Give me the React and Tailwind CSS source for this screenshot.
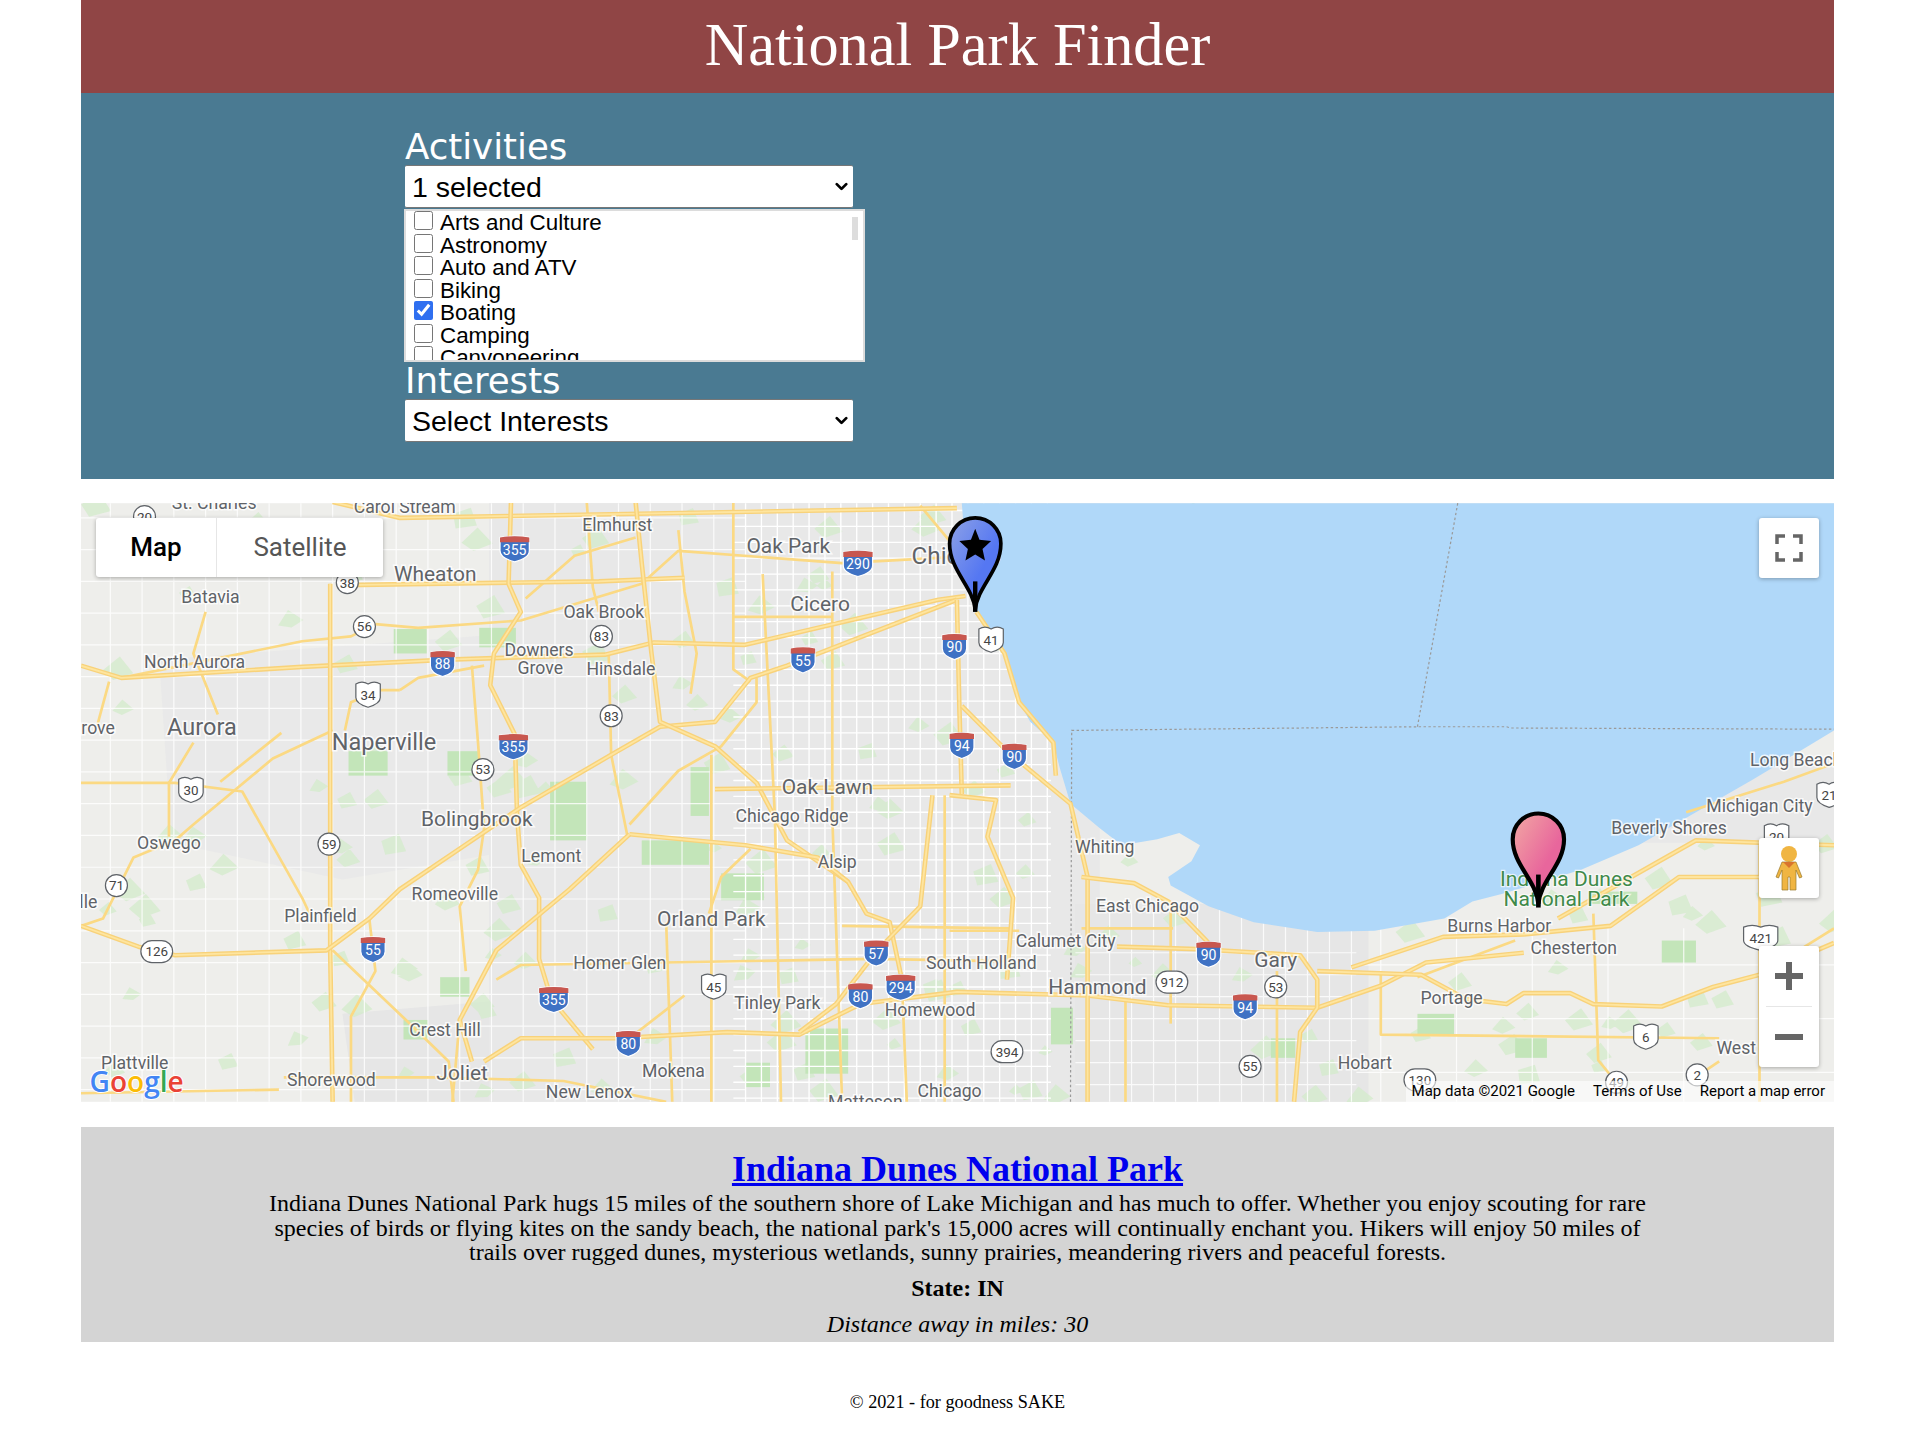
import React from "react";
import { ChevronDown } from "lucide-react";

// ================= MAP DATA (coords in the map's viewBox) =================

const lake =
  "M787 412 L790 450 L799 501 L808 515 L822 535 L832 571 L843 591 L862 608 L867 628 L876 658 L900 678 L918 692 L947 687 L965 682 L982 692 L975 705 L956 718 L958 725 L989 742 L1026 755 L1078 763 L1125 762 L1182 752 L1205 738 L1229 732 L1294 712 L1341 692 L1388 665 L1435 638 L1501 598 L1501 412 Z";

const highways = [
  "M272 411 L327 424 L500 421 L783 416",
  "M66 545 L99 555 L247 546 L366 540 L495 536 L535 526 L609 528 L768 491 L790 488",
  "M270 478 L270 778 L272 902",
  "M282 479 L490 476 L560 473",
  "M418 411 L416 478 L426 501 L404 535 L401 561 L421 601 L423 668 L426 708 L441 735 L441 785 L451 818 L485 859",
  "M783 491 L644 545 L614 555 L585 591 L540 595 L500 618 L426 661 L327 728 L302 752 L267 778 L143 782 L113 775 L66 758",
  "M520 411 L525 461 L533 535 L540 591 L585 611 L619 641 L644 688 L694 722 L709 748 L728 755 L738 802",
  "M396 869 L426 850 L505 850 L595 845 L654 847 L704 822 L783 812 L890 815 L956 823 L1078 825 L1130 807 L1167 788 L1247 780",
  "M763 651 L753 742 L718 778 L684 822 L654 845",
  "M783 491 L785 578 L787 650",
  "M585 646 L827 643",
  "M515 683 L610 692 L669 702 L694 722",
  "M515 683 L466 728 L406 778 L376 835 L386 869",
  "M787 578 L824 615 L876 658 L890 718 L890 902",
  "M799 501 L822 535 L834 575 L862 608 L864 635",
  "M777 651 L815 655 L808 685 L829 735 L824 802",
  "M885 718 L928 723 L956 738 L989 772",
  "M914 775 L980 777 L1064 782 L1078 802 L1078 825 L1064 845 L1059 902",
  "M1078 795 L1163 798 L1200 818 L1233 822 L1247 813 L1285 813 L1304 822 L1360 824 L1402 808 L1440 798 L1501 772",
  "M1106 792 L1181 767 L1247 765 L1318 758 L1374 718 L1440 718",
  "M1275 752 L1388 688 L1501 692",
];

const minorRoads = [
  "M582 618 L582 902",
  "M624 470 L634 668 L639 902",
  "M681 468 L681 668 L689 902",
  "M773 651 L773 902",
  "M498 535 L500 618 L513 683",
  "M66 641 L143 641 L198 648 L247 735 L255 752",
  "M272 598 L223 621 L158 675 L143 688 L109 702 L99 722 L84 752 L66 758",
  "M158 608 L138 641 L138 685",
  "M168 501 L158 535 L178 585",
  "M307 511 L342 514 L426 508 L525 478 L555 451 L689 461 L783 456",
  "M99 555 L247 525 L287 521 L307 511",
  "M327 565 L342 555 L396 545",
  "M386 545 L391 608 L396 678 L391 712 L376 742 L381 795",
  "M232 882 L357 882 L461 885 L545 902",
  "M66 895 L228 892",
  "M302 752 L307 795 L287 832 L287 902",
  "M272 778 L332 835 L367 869 L371 902",
  "M406 802 L426 790 L714 785 L827 787",
  "M689 758 L827 760",
  "M958 742 L958 838",
  "M777 762 L834 762",
  "M1130 795 L1130 847 L1407 850",
  "M1304 748 L1308 868 L1322 885",
  "M1440 692 L1440 902",
  "M1407 869 L1383 885",
  "M921 902 L921 818",
  "M1045 795 L1045 902",
  "M1380 665 L1460 640 L1501 625",
  "M1440 798 L1501 760",
  "M480 411 L485 481 L490 501",
  "M555 434 L560 484 L570 535 L565 568",
  "M600 411 L600 548 L614 558",
  "M619 555 L619 575 L590 611 L555 631 L515 675",
  "M282 598 L287 575 L312 565 L327 565",
  "M614 695 L590 718 L580 748",
  "M545 755 L550 902",
  "M515 850 L560 815",
  "M753 414 L778 444",
  "M79 595 L89 558",
  "M376 835 L370 902",
  "M738 802 L742 902",
  "M430 490 L470 455 L520 440",
  "M600 505 L680 505",
  "M180 640 L230 600",
  "M885 760 L960 760",
  "M1160 800 L1240 770",
];

const greens = [
  [285, 615, 32, 20], [366, 615, 25, 20], [450, 640, 30, 48], [525, 688, 55, 20],
  [565, 628, 15, 40], [659, 842, 35, 37], [322, 515, 27, 20], [392, 514, 30, 16],
  [590, 715, 35, 22], [330, 835, 20, 16], [360, 800, 24, 16], [1160, 830, 30, 18],
  [1240, 850, 26, 16], [1360, 770, 28, 18], [1040, 850, 20, 16], [1300, 730, 40, 10],
  [860, 825, 18, 30], [610, 870, 20, 20],
];

// seeded so the picture stays the same on every load
function makeRandom(seed) {
  let s = seed;
  return () => {
    s = (s * 16807) % 2147483647;
    return s / 2147483647;
  };
}

const rand = makeRandom(4217);
const specks = Array.from({ length: 240 }, () => {
  const x = 66 + rand() * 1435;
  const y = 412 + rand() * 490;
  const a = 5 + rand() * 10;
  const b = 4 + rand() * 9;
  return `M${x} ${y} l${a} ${-b} l${b} ${a} l${-a * 1.2} ${b * 0.5} Z`;
});

const gridLines = [];
for (let x = 610; x < 870; x += 13) gridLines.push(`M${x} 412 L${x} 902`);
for (let y = 418; y < 902; y += 13) gridLines.push(`M600 ${y} L860 ${y}`);
const suburbLines = [];
for (let x = 90; x < 610; x += 26) suburbLines.push(`M${x} 412 L${x} 902`);
for (let y = 424; y < 902; y += 26) suburbLines.push(`M66 ${y} L610 ${y}`);
for (let x = 890; x < 1110; x += 18) suburbLines.push(`M${x} 740 L${x} 902`);
for (let y = 780; y < 902; y += 18) suburbLines.push(`M880 ${y} L1110 ${y}`);
for (let x = 1130; x < 1501; x += 62) suburbLines.push(`M${x} 760 L${x} 902`);
for (let y = 790; y < 902; y += 44) suburbLines.push(`M1110 ${y} L1501 ${y}`);

const labels = [
  ["St. Charles", 175, 417, 13.5], ["Carol Stream", 331, 420, 13.5], ["Elmhurst", 505, 435, 13.5],
  ["Oak Park", 645, 453, 16], ["Chicago", 782, 462, 18.5], ["Wheaton", 356, 476, 16],
  ["Batavia", 172, 494, 13.5], ["Cicero", 671, 500, 16], ["Oak Brook", 494, 506, 13.5],
  ["North Aurora", 159, 547, 13.5], ["Downers", 441, 537, 13.5], ["Grove", 442, 552, 13.5],
  ["Hinsdale", 508, 553, 13.5], ["Aurora", 165, 602, 18], ["rove", 80, 601, 13.5],
  ["Naperville", 314, 614, 18], ["Oak Lawn", 677, 650, 16], ["Chicago Ridge", 648, 673, 13.5],
  ["Bolingbrook", 390, 676, 16], ["Oswego", 138, 695, 13.5], ["Lemont", 451, 706, 13.5],
  ["Alsip", 685, 711, 13.5], ["Whiting", 904, 698, 13.5], ["Romeoville", 372, 737, 13.5],
  ["East Chicago", 939, 747, 13.5], ["lle", 72, 743, 13.5], ["Plainfield", 262, 755, 13.5],
  ["Orland Park", 582, 758, 16], ["Burns Harbor", 1227, 763, 13.5], ["Calumet City", 872, 775, 13.5],
  ["South Holland", 803, 793, 13.5], ["Homer Glen", 507, 793, 13.5], ["Gary", 1044, 792, 16],
  ["Chesterton", 1288, 781, 13.5], ["Hammond", 898, 814, 16], ["Tinley Park", 636, 826, 13.5],
  ["Homewood", 761, 832, 13.5], ["Portage", 1188, 822, 13.5], ["Crest Hill", 364, 848, 13.5],
  ["West", 1421, 863, 13.5], ["Plattville", 110, 875, 13.5], ["Hobart", 1117, 875, 13.5],
  ["Joliet", 378, 884, 16], ["Shorewood", 271, 889, 13.5], ["Mokena", 551, 882, 13.5],
  ["New Lenox", 482, 899, 13.5], ["Chicago", 777, 898, 13.5], ["Matteson", 708, 907, 13.5],
  ["Long Beach", 1470, 627, 13.5], ["Michigan City", 1440, 665, 13.5], ["Beverly Shores", 1366, 683, 13.5],
];

const interstates = [
  ["355", 421, 449], ["290", 702, 461], ["88", 362, 543], ["55", 657, 540], ["90", 781, 529],
  ["355", 420, 611], ["94", 787, 610], ["90", 830, 619], ["55", 305, 777], ["57", 717, 780],
  ["294", 737, 808], ["80", 704, 815], ["355", 453, 818], ["80", 514, 854], ["90", 989, 781],
  ["94", 1019, 824],
];

const rounds = [
  ["38", 284, 477], ["56", 298, 513], ["83", 492, 521], ["83", 500, 586], ["53", 395, 630],
  ["59", 269, 691], ["71", 95, 725], ["126", 128, 779], ["912", 959, 804], ["53", 1044, 808],
  ["394", 824, 861], ["55", 1023, 873], ["130", 1162, 884], ["49", 1323, 886], ["2", 1389, 880],
  ["20", 118, 423],
];

const usShields = [
  ["34", 301, 568], ["30", 156, 646], ["41", 811, 523], ["45", 584, 807], ["421", 1441, 767],
  ["6", 1347, 848], ["21", 1497, 650], ["20", 1454, 684],
];

const activities = [
  "Arts and Culture",
  "Astronomy",
  "Auto and ATV",
  "Biking",
  "Boating",
  "Camping",
  "Canyoneering",
];

// ================= MAP PIECES =================

function InterstateShield({ n, x, y }) {
  const w = n.length > 2 ? 12 : 10;
  return (
    <g transform={`translate(${x} ${y})`}>
      <path
        d={`M${-w} -9 Q0 -11 ${w} -9 L${w} 2 Q${w} 8 0 11 Q${-w} 8 ${-w} 2 Z`}
        fill="#3f72c4"
        stroke="#fff"
        strokeWidth="1"
      />
      <path d={`M${-w} -9 Q0 -11 ${w} -9 L${w} -5 L${-w} -5 Z`} fill="#c8574f" />
      <text x="0" y="5" textAnchor="middle" fontSize="11.5" fill="#fff">
        {n}
      </text>
    </g>
  );
}

function RoundShield({ n, x, y }) {
  const w = n.length > 2 ? 13 : 9;
  return (
    <g transform={`translate(${x} ${y})`}>
      <rect x={-w} y="-9" width={w * 2} height="18" rx="9" fill="#fff" stroke="#5f6368" strokeWidth="1" />
      <text x="0" y="4" textAnchor="middle" fontSize="11" fill="#444">
        {n}
      </text>
    </g>
  );
}

function UsShield({ n, x, y }) {
  const w = n.length > 2 ? 14 : 10;
  return (
    <g transform={`translate(${x} ${y})`}>
      <path
        d={`M${-w} -8 Q${-w / 2} -11 0 -8 Q${w / 2} -11 ${w} -8 L${w} 3 Q${w} 8 0 11 Q${-w} 8 ${-w} 3 Z`}
        fill="#fff"
        stroke="#5f6368"
        strokeWidth="1"
      />
      <text x="0" y="5" textAnchor="middle" fontSize="11" fill="#444">
        {n}
      </text>
    </g>
  );
}

function MapDrawing() {
  return (
    <svg viewBox="66 412 1435 490" className="block w-full h-full [font-family:Roboto,sans-serif]">
      <defs>
        <linearGradient id="blueFill" x1="0" y1="0" x2="1" y2="1">
          <stop offset="0" stopColor="#8ea2e6" />
          <stop offset="0.6" stopColor="#5577f2" />
        </linearGradient>
        <linearGradient id="pinkFill" x1="0" y1="0" x2="1" y2="1">
          <stop offset="0" stopColor="#f2a9a3" />
          <stop offset="0.6" stopColor="#e8669c" />
        </linearGradient>
      </defs>

      <rect x="66" y="412" width="1435" height="490" fill="#eeeeeb" />
      {/* built-up areas */}
      <rect x="400" y="412" width="500" height="490" fill="#e8e8e8" />
      <path d="M130 540 L400 520 L400 700 L280 720 L140 690 Z" fill="#e9e9e9" />
      <path d="M280 830 L400 820 L400 902 L290 902 Z" fill="#e6e6e6" />
      <rect x="880" y="740" width="240" height="162" fill="#e6e6e6" />
      <rect x="1290" y="620" width="211" height="70" fill="#e8e8e8" />
      <path d={specks.join(" ")} fill="#d3ebcb" opacity="0.75" />
      {greens.map(([x, y, w, h], i) => (
        <rect key={i} x={x} y={y} width={w} height={h} fill="#c3e5b9" />
      ))}
      <path d={suburbLines.join(" ")} stroke="#fff" strokeWidth="1" fill="none" opacity="0.8" />
      <path d={gridLines.join(" ")} stroke="#fff" strokeWidth="1.1" fill="none" />

      <path d={lake} fill="#b0d8f9" />
      <path d="M1193 412 L1160 595" stroke="#9a9a9a" strokeWidth="1" strokeDasharray="2 2" fill="none" />
      <path
        d="M876 902 L877 598 L1160 595 L1233 595 L1236 596 L1501 597"
        stroke="#9a9a9a"
        strokeWidth="1"
        strokeDasharray="2 2"
        fill="none"
      />

      {minorRoads.map((d, i) => (
        <path key={i} d={d} stroke="#fbd983" strokeWidth="2.2" fill="none" strokeLinejoin="round" />
      ))}
      {highways.map((d, i) => (
        <g key={i} fill="none" strokeLinejoin="round">
          <path d={d} stroke="#f8d27a" strokeWidth="3.8" />
          <path d={d} stroke="#fee59f" strokeWidth="1.5" />
        </g>
      ))}

      {labels.map(([t, x, y, s], i) => (
        <text
          key={i}
          x={x}
          y={y}
          fontSize={s * 1.07}
          textAnchor="middle"
          fill="#5f6368"
          stroke="#fff"
          strokeOpacity="0.8"
          strokeWidth="2.5"
          paintOrder="stroke"
        >
          {t}
        </text>
      ))}
      <g fontSize="17.2" textAnchor="middle" fill="#3f8a4a" stroke="#fff" strokeOpacity="0.7" strokeWidth="2" paintOrder="stroke">
        <text x="1282" y="725">Indiana Dunes</text>
        <text x="1282" y="742">National Park</text>
      </g>

      {rounds.map(([n, x, y], i) => (
        <RoundShield key={i} n={n} x={x} y={y} />
      ))}
      {usShields.map(([n, x, y], i) => (
        <UsShield key={i} n={n} x={x} y={y} />
      ))}
      {interstates.map(([n, x, y], i) => (
        <InterstateShield key={i} n={n} x={x} y={y} />
      ))}

      {/* Blue star marker */}
      <path
        d="M798 499 C796 480 777 467 777 445 A21 21 0 1 1 819 445 C819 467 800 480 798 499 Z"
        fill="url(#blueFill)"
        stroke="#000"
        strokeWidth="3"
      />
      <path d="M798 476 L798 501" stroke="#000" strokeWidth="3.6" />
      <path
        d="M798 433 L801.5 442 L811 443 L804 449.5 L806 459 L798 454 L790 459 L792 449.5 L785 443 L794.5 442 Z"
        fill="#000"
      />

      {/* Pink marker */}
      <path
        d="M1259 740 C1257 720 1238 708 1238 687 A21 21 0 1 1 1280 687 C1280 708 1261 720 1259 740 Z"
        fill="url(#pinkFill)"
        stroke="#000"
        strokeWidth="3.4"
      />
      <path d="M1259 716 L1259 743" stroke="#000" strokeWidth="3.8" />

      {/* Google logo */}
      <text x="73" y="894" fontSize="23" stroke="#fff" strokeWidth="1.5" paintOrder="stroke" className="[font-family:'Open_Sans',sans-serif]" fontWeight="600">
        <tspan fill="#4285f4">G</tspan>
        <tspan fill="#ea4335">o</tspan>
        <tspan fill="#fbbc05">o</tspan>
        <tspan fill="#4285f4">g</tspan>
        <tspan fill="#34a853">l</tspan>
        <tspan fill="#ea4335">e</tspan>
      </text>
    </svg>
  );
}

function Pegman() {
  return (
    <svg width="30" height="46" viewBox="0 0 30 46">
      <circle cx="15" cy="9" r="8" fill="#f0b542" />
      <path
        d="M8 17 L22 17 L28 32 L25.5 33 L22 25 L22 45 L16 45 L16 32 L14 32 L14 45 L8 45 L8 25 L4.5 33 L2 32 Z"
        fill="#f0b542"
        stroke="#9a7a2c"
        strokeWidth="0.7"
      />
      <path d="M9 17 L21 17 L15 23 Z" fill="#d9742e" />
    </svg>
  );
}

function FakeSelect({ label }) {
  return (
    <div className="relative w-[448px] h-[43px] bg-white border-y border-[#777] rounded-[2px]">
      <select className="appearance-none w-full h-full pl-[7px] pr-8 text-[28.5px] text-black bg-transparent outline-none [font-family:'Liberation_Sans',Arial,sans-serif]">
        <option>{label}</option>
      </select>
      <ChevronDown size={19} strokeWidth={3.5} className="absolute right-[2px] top-[11px] text-black pointer-events-none" />
    </div>
  );
}

export default function App() {
  return (
    <div className="min-h-[1452px] bg-white pl-[81px] pr-[82px] w-[1916px] [font-family:'Liberation_Serif','Times_New_Roman',serif] text-black">
      {/* HEADER */}
      <header className="h-[93px] bg-[#904545] flex items-center justify-center pb-[2px]">
        <h1 className="text-[60.3px] leading-none text-white">National Park Finder</h1>
      </header>

      {/* FILTERS */}
      <section className="h-[386px] bg-[#4a7a92] pl-[324px] pt-[36px] [font-family:'DejaVu_Sans',Verdana,sans-serif]">
        <h2 className="text-[35.6px] leading-[36px] text-white">Activities</h2>
        <FakeSelect label="1 selected" />
        <div className="relative w-[461px] h-[153px] -ml-[1px] mt-[1px] bg-white border-2 border-[#dcdcdc] overflow-hidden pl-[8px] pt-[1px] [font-family:'Liberation_Sans',Arial,sans-serif]">
          {activities.map((a) => (
            <label key={a} className="flex items-center h-[22.5px] text-[22.4px] leading-none">
              <input
                type="checkbox"
                readOnly
                checked={a === "Boating"}
                className="w-[19px] h-[19px] mr-[7px] accent-[#2f6ff0] -mt-[5px]"
              />
              {a}
            </label>
          ))}
          <div className="absolute right-[5px] top-[6px] w-[6px] h-[23px] bg-[#dddddd]" />
        </div>
        <h2 className="text-[35.6px] leading-[36px] mt-[1px] text-white">Interests</h2>
        <FakeSelect label="Select Interests" />
      </section>

      {/* MAP */}
      <section className="relative mt-[24px] h-[599px] overflow-hidden">
        <MapDrawing />

        <div className="absolute left-[15px] top-[15px] flex h-[59px] bg-white rounded-[3px] shadow-[0_1px_4px_rgba(0,0,0,0.3)] text-[26px] [font-family:Roboto,sans-serif]">
          <div className="w-[121px] flex items-center justify-center font-medium text-black border-r border-[#e6e6e6]">Map</div>
          <div className="w-[166px] flex items-center justify-center text-[#565656]">Satellite</div>
        </div>

        <div className="absolute right-[15px] top-[15px] w-[60px] h-[60px] bg-white rounded-[3px] shadow-[0_1px_4px_rgba(0,0,0,0.3)] flex items-center justify-center">
          <svg width="28" height="28" viewBox="0 0 28 28" fill="none" stroke="#666" strokeWidth="3.5">
            <path d="M2 10 V2 H10 M18 2 H26 V10 M26 18 V26 H18 M10 26 H2 V18" />
          </svg>
        </div>

        <div className="absolute right-[15px] top-[335px] w-[60px] h-[60px] bg-white rounded-[3px] shadow-[0_1px_4px_rgba(0,0,0,0.3)] flex items-center justify-center">
          <Pegman />
        </div>

        <div className="absolute right-[15px] top-[443px] w-[60px] h-[121px] bg-white rounded-[3px] shadow-[0_1px_4px_rgba(0,0,0,0.3)] flex flex-col items-center">
          <div className="h-[60px] flex items-center justify-center">
            <svg width="28" height="28" viewBox="0 0 28 28" fill="#666">
              <path d="M11 0 H17 V11 H28 V17 H17 V28 H11 V17 H0 V11 H11 Z" />
            </svg>
          </div>
          <div className="w-[46px] h-px bg-[#e6e6e6]" />
          <div className="h-[60px] flex items-center justify-center">
            <div className="w-[28px] h-[6px] bg-[#666]" />
          </div>
        </div>

        <div className="absolute right-0 bottom-0 h-[21px] flex items-center pl-[6px] pr-[9px] gap-[18px] bg-white/60 text-[15px] text-black [font-family:Roboto,sans-serif]">
          <span>Map data ©2021 Google</span>
          <span>Terms of Use</span>
          <span>Report a map error</span>
        </div>
      </section>

      {/* PARK DETAILS */}
      <section className="mt-[25px] h-[215px] bg-[#d4d4d4] text-center pt-[22px]">
        <h2 className="text-[36px] leading-[40px] font-bold">
          <a href="#" className="text-[#0000ee] underline">
            Indiana Dunes National Park
          </a>
        </h2>
        <p className="mt-[2px] w-[1385px] mx-auto text-[24px] leading-[24.5px]">
          Indiana Dunes National Park hugs 15 miles of the southern shore of Lake Michigan and has much to offer. Whether you enjoy scouting for rare species of birds or flying kites on the sandy beach, the national park's 15,000 acres will continually enchant you. Hikers will enjoy 50 miles of trails over rugged dunes, mysterious wetlands, sunny prairies, meandering rivers and peaceful forests.
        </p>
        <p className="mt-[11px] text-[24px] leading-[24.5px] font-bold">State: IN</p>
        <p className="mt-[12px] text-[24px] leading-[24.5px] italic">Distance away in miles: 30</p>
      </section>

      {/* FOOTER */}
      <footer className="mt-[48px] text-center text-[18.2px] leading-[24px]">© 2021 - for goodness SAKE</footer>
    </div>
  );
}
